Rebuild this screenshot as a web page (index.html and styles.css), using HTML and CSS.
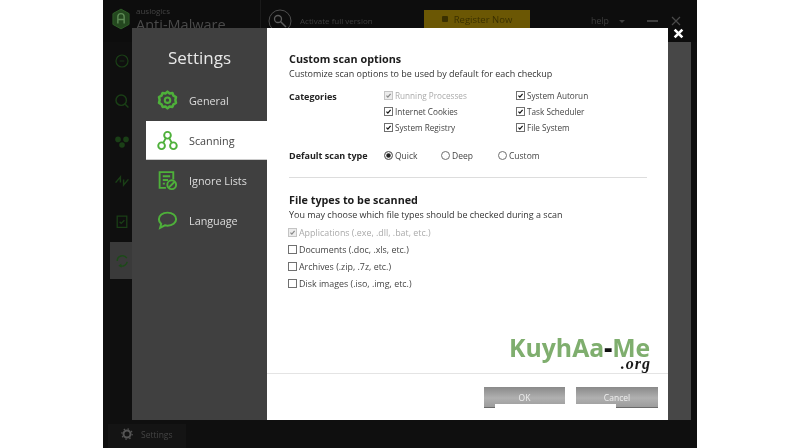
FILE: index.html
```html
<!DOCTYPE html>
<html lang="en">
<head>
<meta charset="utf-8">
<title>Settings</title>
<link rel="stylesheet" href="styles.css">
</head>
<body>
<svg class="defs" width="0" height="0">
  <symbol id="tick" viewBox="0 0 11 11"><path d="M2.3 5.6 4.5 8 8.8 2.8" fill="none" stroke="currentColor" stroke-width="1.9"/></symbol>
</svg>
<div class="app">
  <header class="top">
    <div class="brand">
      <svg class="brand-logo" viewBox="0 0 20 24"><path d="M10 1 19 6v12l-9 5-9-5V6z" fill="#24481f" stroke="#2f5f28"/><path d="M6.5 17V9.500a3.500 3.500 0 0 1 7 0V17M6.500 12.500h7" fill="none" stroke="#5d8a55" stroke-width="1.600"/></svg>
      <div class="brand-text"><span class="brand-small">auslogics</span><span class="brand-big">Anti-Malware</span></div>
    </div>
    <div class="activate">
      <svg class="key" viewBox="0 0 24 24"><circle cx="12" cy="12" r="11" fill="none" stroke="#4e4e4e"/><circle cx="10" cy="10" r="3.500" fill="none" stroke="#5c5c5c" stroke-width="1.300"/><path d="M12.500 12.500 18 18" stroke="#5c5c5c" stroke-width="1.500"/></svg>
      <span>Activate full version</span>
    </div>
    <div class="register"><span class="lock"></span>Register Now</div>
    <div class="winctl">
      <span class="help">help</span><span class="caret"></span>
      <span class="min"></span>
      <svg class="winx" viewBox="0 0 10 10"><path d="M1 1 9 9M9 1 1 9" stroke="#4a4a4a" stroke-width="1.200"/></svg>
    </div>
  </header>
  <div class="mid">
    <nav class="rail">
      <div class="rail-item"><svg viewBox="0 0 20 20"><circle cx="10" cy="10" r="7.500" fill="none" stroke="#1a3f16" stroke-width="1.500"/><path d="M7 10h6" stroke="#1a3f16"/></svg></div>
      <div class="rail-item"><svg viewBox="0 0 20 20"><circle cx="9" cy="9" r="6.500" fill="none" stroke="#1a3f16" stroke-width="1.800"/><path d="m14 14 4 4" stroke="#1a3f16" stroke-width="1.800"/></svg></div>
      <div class="rail-item"><svg viewBox="0 0 20 20"><g fill="#1a3f16"><circle cx="5" cy="8" r="3.500"/><circle cx="15" cy="8" r="3.500"/><circle cx="10" cy="15" r="3.500"/></g></svg></div>
      <div class="rail-item"><svg viewBox="0 0 20 20"><path d="M2 12 8 5l0 7M18 8l-6 7 0-7" fill="none" stroke="#1a3f16" stroke-width="1.800"/></svg></div>
      <div class="rail-item"><svg viewBox="0 0 20 20"><path d="M4 4h12v14H4zM7 11l2 2 4-4" fill="none" stroke="#1a3f16" stroke-width="1.600"/></svg></div>
      <div class="rail-item rail-active"><svg viewBox="0 0 20 20"><path d="M4 10a6.500 6.500 0 0 1 12-3.500M16.500 11a6.500 6.500 0 0 1-8.500 5" fill="none" stroke="#1c4a18" stroke-width="1.800"/><path d="m5.500 16 3.500-2.500.5 5z" fill="#1c4a18"/></svg></div>
    </nav>
    <main class="panel"></main>
  </div>
  <footer class="foot">
    <div class="foot-btn">
      <svg viewBox="0 0 12 12"><circle cx="6" cy="6" r="3.500" fill="none" stroke="#555" stroke-width="2"/><circle cx="6" cy="6" r="5.200" fill="none" stroke="#555" stroke-width="1.200" stroke-dasharray="1.500 2.580"/></svg>
      <span>Settings</span>
    </div>
  </footer>

  <section class="dialog">
    <aside class="side">
      <h1 class="side-title">Settings</h1>
      <ul class="side-list">
        <li class="side-item">
          <svg viewBox="0 0 20 20"><path d="M10 1.500l2 1.800 2.700-.4 1 2.500 2.400 1.300-.6 2.800.6 2.800-2.400 1.300-1 2.500-2.700-.4-2 1.800-2-1.800-2.700.4-1-2.500L1.900 12.300l.6-2.800-.6-2.800 2.400-1.300 1-2.500 2.700.4z" fill="none" stroke="#4eb03a" stroke-width="2.400" stroke-linejoin="round"/><circle cx="10" cy="9.700" r="2.600" fill="none" stroke="#4eb03a" stroke-width="2"/></svg>
          General
        </li>
        <li class="side-item side-on">
          <svg viewBox="0 0 22 22"><g fill="none" stroke="#4eb03a" stroke-width="2"><circle cx="11" cy="5.500" r="3.500"/><circle cx="4.800" cy="16.500" r="3.500"/><circle cx="17.200" cy="16.500" r="3.500"/><path d="M9.200 8.500 6.500 13.500M12.800 8.500l2.700 5"/></g></svg>
          Scanning
        </li>
        <li class="side-item">
          <svg viewBox="0 0 20 20"><g fill="none" stroke="#4eb03a" stroke-width="1.800"><path d="M8.500 17H2.500V2h13v7"/><path d="M5.500 6h7M5.500 9.500h5M5.500 13h2"/><circle cx="14" cy="14" r="4.200"/><path d="m11.200 16.800 5.600-5.600"/></g></svg>
          Ignore Lists
        </li>
        <li class="side-item">
          <svg viewBox="0 0 20 20"><path d="M10 2.500c4.700 0 8.200 2.700 8.200 6.200s-3.500 6.200-8.200 6.200c-.9 0-1.700-.1-2.500-.3L3 17l1-3.700C2.700 12.200 1.800 10.600 1.800 8.700 1.800 5.200 5.300 2.500 10 2.500z" fill="none" stroke="#4eb03a" stroke-width="1.900"/></svg>
          Language
        </li>
      </ul>
    </aside>
    <div class="content">
      <div class="body">
        <h2 class="head">Custom scan options</h2>
        <p class="sub">Customize scan options to be used by default for each checkup</p>
        <div class="opt-row cats">
          <span class="lbl">Categories</span>
          <div class="cat-grid">
            <label class="ck off"><span class="box"><svg><use href="#tick"/></svg></span>Running Processes</label>
            <label class="ck"><span class="box"><svg><use href="#tick"/></svg></span>System Autorun</label>
            <label class="ck"><span class="box"><svg><use href="#tick"/></svg></span>Internet Cookies</label>
            <label class="ck"><span class="box"><svg><use href="#tick"/></svg></span>Task Scheduler</label>
            <label class="ck"><span class="box"><svg><use href="#tick"/></svg></span>System Registry</label>
            <label class="ck"><span class="box"><svg><use href="#tick"/></svg></span>File System</label>
          </div>
        </div>
        <div class="opt-row types">
          <span class="lbl">Default scan type</span>
          <div class="radios">
            <label class="rd sel"><span class="dot"></span>Quick</label>
            <label class="rd"><span class="dot"></span>Deep</label>
            <label class="rd"><span class="dot"></span>Custom</label>
          </div>
        </div>
        <hr class="rule">
        <h2 class="head head2">File types to be scanned</h2>
        <p class="sub">You may choose which file types should be checked during a scan</p>
        <div class="files">
          <label class="ck off"><span class="box"><svg><use href="#tick"/></svg></span>Applications (.exe, .dll, .bat, etc.)</label>
          <label class="ck"><span class="box"></span>Documents (.doc, .xls, etc.)</label>
          <label class="ck"><span class="box"></span>Archives (.zip, .7z, etc.)</label>
          <label class="ck"><span class="box"></span>Disk images (.iso, .img, etc.)</label>
        </div>
      </div>
      <div class="actions">
        <button class="btn">OK</button>
        <button class="btn">Cancel</button>
      </div>
      <div class="mark"><span class="mark-main">KuyhAa<b>-</b>Me</span><span class="mark-org">.org</span></div>
      <div class="patch"></div>
    </div>
  </section>
  <svg class="close" viewBox="0 0 10 10"><path d="M1.500 1.500 8.500 8.500M8.500 1.500 1.500 8.500" stroke="#fff" stroke-width="2.400"/></svg>
</div>
</body>
</html>
```
FILE: styles.css
```css
* { box-sizing: border-box; }
html, body { margin: 0; height: 100%; background: #fff; overflow: hidden; }
body { display: flex; justify-content: center; font-family: "Open Sans", "Noto Sans", sans-serif; }
.defs { position: absolute; }
.app { position: relative; width: 594px; height: 448px; background: #0f0f0f; display: flex; flex-direction: column; color: #555; filter: blur(0.35px); }

.top { height: 42px; display: flex; align-items: flex-start; background: #0d0d0d; }
.brand { width: 158px; height: 41px; display: flex; gap: 6px; padding: 7px 0 0 9px; border-right: 1px solid #1a1a1a; }
.brand-logo { width: 18px; height: 24px; }
.brand-text { display: flex; flex-direction: column; margin-top: -1px; }
.brand-small { font-size: 8px; line-height: 10px; color: #444; }
.brand-big { font-size: 14.500px; line-height: 17px; color: #4a4a4a; }
.activate { display: flex; align-items: center; gap: 8px; padding: 8px 0 0 7px; width: 163px; font-size: 8px; color: #3f3f3f; }
.key { width: 24px; height: 24px; margin-top: 1px; }
.register { margin-top: 10px; width: 106px; height: 18px; background: #6b5704; color: #3a3000; font-size: 9.500px; display: flex; align-items: center; justify-content: center; gap: 6px; }
.lock { width: 6px; height: 6px; background: #3a3000; border-radius: 1px; }
.winctl { display: flex; align-items: center; height: 20px; margin-top: 11px; padding-left: 61px; color: #3d3d3d; font-size: 8.800px; }
.caret { margin-left: 10px; border: 3px solid transparent; border-top: 3px solid #3d3d3d; border-bottom: 0; }
.min { width: 11px; height: 2px; background: #3f3f3f; margin-left: 22px; }
.winx { width: 10px; height: 10px; margin-left: 13px; }

.mid { flex: 1; display: flex; min-height: 0; }
.rail { width: 29px; display: flex; flex-direction: column; padding: 0 0 0 7px; gap: 3px; }
.rail-item { width: 22px; height: 37px; display: flex; align-items: center; justify-content: flex-start; padding-left: 4px; }
.rail-item svg { width: 16px; height: 16px; flex: none; }
.rail-active { background: #3a3a3a; }
.panel { width: 559px; background: #474747; }

.foot { height: 28px; padding: 4px 0 0 5px; }
.foot-btn { width: 78px; height: 24px; background: #141414; display: flex; align-items: center; gap: 8px; padding: 0 0 4px 13px; font-size: 8.500px; color: #444; }
.foot-btn svg { width: 12px; height: 12px; }

.dialog { position: absolute; left: 29px; top: 28px; width: 536px; height: 392px; display: flex; }
.side { width: 135px; background: #404040; color: #ddd; display: flex; flex-direction: column; }
.side-title { margin: 17px 0 0; height: 25px; font-size: 17px; line-height: 25px; font-weight: 400; padding-left: 36px; color: #e8e8e8; }
.side-list { list-style: none; margin: 11px 0 0 14px; padding: 0; }
.side-item { height: 40px; display: flex; align-items: center; gap: 11px; padding: 0 0 2px 11px; font-size: 10.800px; color: #ddd; }
.side-item svg { width: 21px; height: 21px; flex: none; }
.side-on { background: #fff; color: #444; height: 39px; margin-bottom: 1px; padding-bottom: 0; border-bottom: 1px solid #ccc; }

.content { position: relative; width: 401px; background: #fff; display: flex; flex-direction: column; color: #333; }
.body { flex: 1; padding: 23px 21px 0 22px; border-bottom: 1px solid #e4e4e4; }
.head { margin: 0; font-size: 10.800px; line-height: 15px; font-weight: 700; color: #1c1c1c; }
.sub { margin: 1px 0 0; font-size: 8.970px; line-height: 14px; color: #333; }
.opt-row { display: flex; }
.lbl { width: 95px; font-size: 9px; font-weight: 700; color: #222; flex: none; }
.cats { margin-top: 6px; }
.cats .lbl { line-height: 16px; padding-top: 2px; }
.cat-grid { display: grid; grid-template-columns: 132px 1fr; grid-auto-rows: 16px; }
.ck { display: flex; align-items: center; font-size: 8.200px; color: #444; height: 16px; }
.box { width: 9px; height: 9px; margin: 0 2px 0 0; border: 1px solid #707070; display: block; color: #111; flex: none; }
.box svg { display: block; width: 7px; height: 7px; }
.off { color: #aaa; }
.off .box { border-color: #c4c4c4; background: #ececec; color: #888; }
.types { margin-top: 13px; align-items: center; height: 14px; }
.radios { display: flex; }
.rd { width: 57px; display: flex; align-items: center; gap: 2px; font-size: 8.500px; color: #444; }
.dot { width: 9px; height: 9px; border: 1px solid #707070; border-radius: 50%; flex: none; }
.sel .dot { background: #222; box-shadow: inset 0 0 0 1.200px #fff; }
.rule { margin: 15px 0 0; border: 0; border-top: 1px solid #ddd; }
.head2 { margin-top: 14px; }
.files { margin: 2px 0 0 -1px; display: flex; flex-direction: column; }
.files .ck { height: 17px; font-size: 8.900px; }
.actions { height: 46px; flex: none; display: flex; gap: 11px; padding: 13px 0 0 217px; }
.btn { width: 81px; height: 21px; border: 0; border-bottom: 1px solid #6a6a6a; background: linear-gradient(#8a8a8a, #b0b0b0 55%, #9c9c9c); color: #eee; font: 8.500px "Open Sans", sans-serif; padding: 0; }
.btn:last-child { width: 82px; }
.mark { position: absolute; left: 242px; top: 308px; width: 142px; }
.mark-main { display: block; font-family: "Open Sans", sans-serif; font-weight: 700; font-size: 24.800px; line-height: 22px; color: #7fae6e; white-space: nowrap; }
.mark-main b { color: #111; }
.mark-org { display: block; margin-top: 2px; text-align: right; font: italic 700 16px/8px "Liberation Serif", serif; letter-spacing: 1px; color: #1a1a1a; }
.patch { position: absolute; left: 228px; top: 376px; width: 121px; height: 16px; background: #fff; }
.close { position: absolute; left: 570px; top: 28px; width: 11px; height: 11px; }
```
